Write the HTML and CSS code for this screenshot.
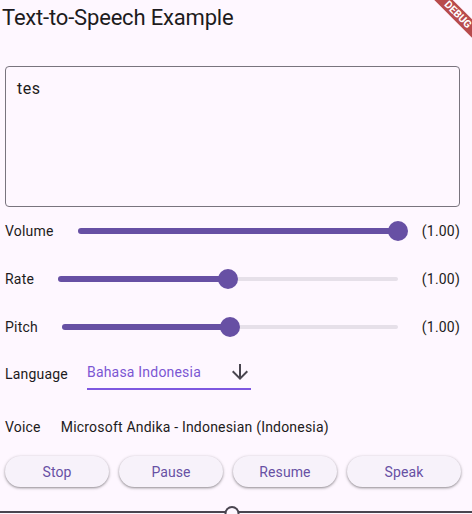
FILE: index.html
```html
<!DOCTYPE html>
<html>
<head>
<meta charset="utf-8">
<link rel="stylesheet" href="styles.css">
</head>
<body>
<div class="app">
  <header class="appbar"><h1 class="title">Text-to-Speech Example</h1></header>
  <div class="debug-banner"><span>DEBUG</span></div>
  <main class="content">
    <div class="textfield">tes</div>

    <div class="slider-row">
      <span class="label">Volume</span>
      <div class="slider">
        <div class="track-active" style="width:100%"></div>
        <div class="track-inactive"></div>
        <div class="thumb" style="left:100%"></div>
      </div>
      <span class="value">(1.00)</span>
    </div>

    <div class="slider-row">
      <span class="label">Rate</span>
      <div class="slider">
        <div class="track-active" style="width:50%"></div>
        <div class="track-inactive"></div>
        <div class="thumb" style="left:50%"></div>
      </div>
      <span class="value">(1.00)</span>
    </div>

    <div class="slider-row">
      <span class="label">Pitch</span>
      <div class="slider">
        <div class="track-active" style="width:50%"></div>
        <div class="track-inactive"></div>
        <div class="thumb" style="left:50%"></div>
      </div>
      <span class="value">(1.00)</span>
    </div>

    <div class="lang-row">
      <span class="label">Language</span>
      <div class="dropdown">
        <span class="dropdown-text">Bahasa Indonesia</span>
        <svg class="dropdown-icon" viewBox="0 0 24 24" width="24" height="24"><path d="M20 12l-1.41-1.41L13 16.17V4h-2v12.17l-5.58-5.59L4 12l8 8 8-8z" fill="#49454f"/></svg>
      </div>
    </div>

    <div class="voice-row">
      <span class="label">Voice</span>
      <span class="voice-value">Microsoft Andika - Indonesian (Indonesia)</span>
    </div>

    <div class="buttons">
      <button class="btn">Stop</button>
      <button class="btn">Pause</button>
      <button class="btn">Resume</button>
      <button class="btn">Speak</button>
    </div>
  </main>
  <svg class="bottom-slider" width="472" height="8" viewBox="0 0 472 8">
    <line x1="0" y1="6" x2="472" y2="6" stroke="#4a4550" stroke-width="2"/>
    <circle cx="232" cy="7.5" r="6.5" fill="#fef7ff" stroke="#4a4550" stroke-width="2"/>
  </svg>
</div>
</body>
</html>
```

FILE: styles.css
```css
html, body {
  margin: 0;
  padding: 0;
  overflow: hidden;
  background: #fef7ff;
}
body {
  font-family: Roboto, "Noto Sans", sans-serif;
  color: #1d1b20;
}
.app {
  position: relative;
  width: 472px;
  height: 514px;
  overflow: hidden;
}
.appbar {
  height: 56px;
  padding: 4px 2px 0;
  box-sizing: border-box;
}
.title {
  margin: 0;
  font-size: 22px;
  font-weight: 400;
  line-height: 28px;
  letter-spacing: -0.18px;
}
.debug-banner {
  position: absolute;
  top: 0;
  right: 0;
  width: 60px;
  height: 60px;
  overflow: hidden;
  z-index: 5;
}
.debug-banner span {
  position: absolute;
  top: 8px;
  right: -25.5px;
  width: 80px;
  height: 13px;
  line-height: 13px;
  transform: rotate(45deg);
  background: rgba(168, 36, 36, 0.82);
  color: #fff;
  font-size: 10.5px;
  font-weight: 700;
  text-align: center;
}
.content {
  padding: 10px 12px 0 5px;
  display: flex;
  flex-direction: column;
}
.textfield {
  height: 141px;
  box-sizing: border-box;
  border: 1px solid #79747e;
  border-radius: 4px;
  padding: 10px 11px;
  font-size: 16px;
  line-height: 24px;
  letter-spacing: 0.5px;
}
.label, .value, .voice-value {
  font-size: 14px;
  letter-spacing: 0.2px;
  line-height: 20px;
}
.slider-row {
  height: 48px;
  display: flex;
  align-items: center;
}
.slider-row:nth-of-type(4) {
  height: 47px;
}
.slider {
  position: relative;
  flex: 1;
  height: 20px;
  margin: 0 24px;
  display: flex;
  align-items: center;
}
.track-active {
  position: absolute;
  left: 0;
  top: 7px;
  height: 6px;
  border-radius: 3px;
  background: #6750a4;
}
.track-inactive {
  flex: 1;
  height: 4px;
  border-radius: 2px;
  background: #e6e0e9;
}
.thumb {
  position: absolute;
  top: 0;
  width: 20px;
  height: 20px;
  margin-left: -10px;
  border-radius: 50%;
  background: #6750a4;
  z-index: 1;
}
.lang-row {
  height: 48px;
  display: flex;
  align-items: center;
}
.dropdown {
  margin-left: 19px;
  width: 164px;
  height: 34px;
  box-sizing: border-box;
  border-bottom: 2px solid #7e57e0;
  display: flex;
  align-items: center;
  justify-content: space-between;
  margin-bottom: 2px;
}
.dropdown-text {
  font-size: 14px;
  letter-spacing: 0.2px;
  color: #7b56d3;
}
.dropdown-icon {
  margin-right: -1px;
}
.voice-row {
  height: 57px;
  display: flex;
  align-items: center;
  gap: 20px;
}
.buttons {
  display: grid;
  grid-template-columns: 104px 104px 104px 114px;
  column-gap: 10px;
  margin-top: 1px;
}
.btn {
  height: 31px;
  border: none;
  border-radius: 16px;
  background: #f7f2fa;
  box-shadow: 0 1px 2px rgba(0, 0, 0, 0.3), 0 1px 3px 1px rgba(0, 0, 0, 0.12);
  font-family: Roboto, sans-serif;
  font-size: 14px;
  font-weight: 400;
  letter-spacing: 0.1px;
  color: #6750a4;
  padding: 0;
}
.bottom-slider {
  display: block;
  margin-top: 19px;
}
```
